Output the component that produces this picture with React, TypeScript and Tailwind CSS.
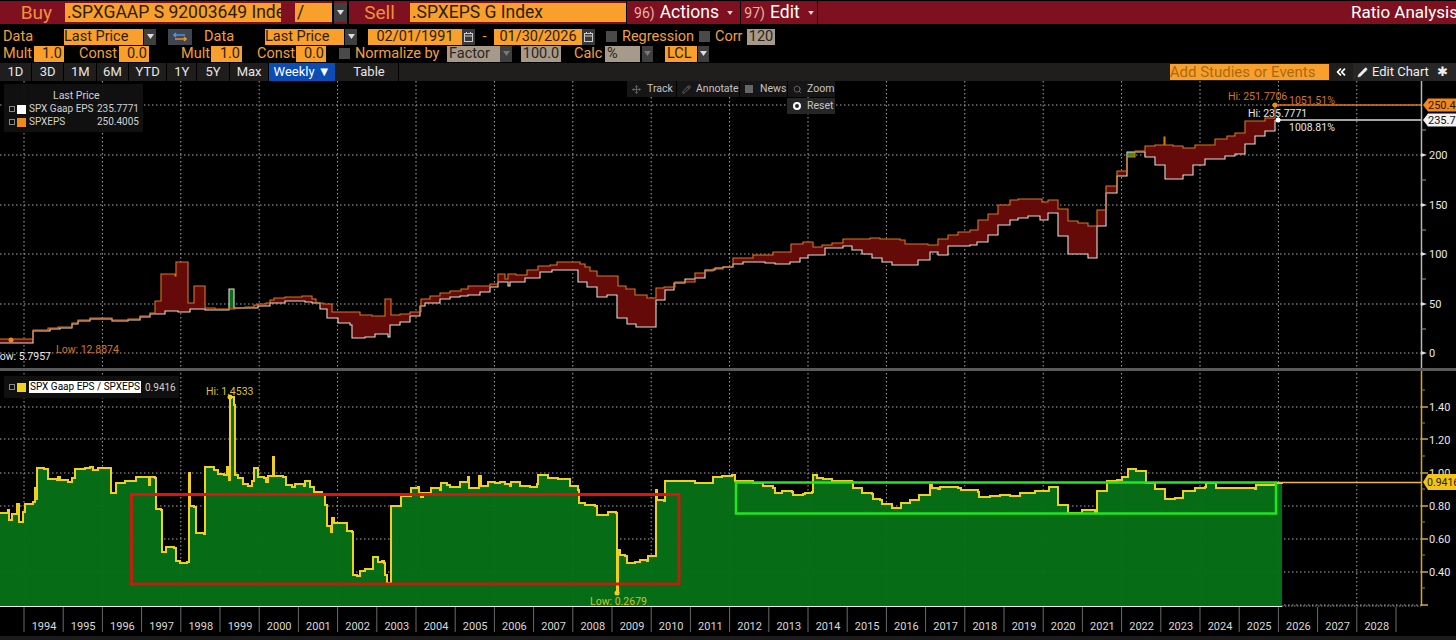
import React from "react";
import { ChevronsLeft, Move, Pencil, Search } from "lucide-react";

type Pt = [number, number];

const orange: Pt[] = [
  [0, 339], [33, 330], [48, 328], [58, 327], [72, 323], [78, 320], [90, 318], [108, 318], [112, 320], [128, 319],
  [140, 316], [150, 313], [155, 301], [161, 274], [175, 276], [176, 262], [188, 303], [194, 286], [205, 308], [215, 309],
  [229, 309], [235, 308], [245, 307], [254, 305], [258, 304], [266, 303], [270, 300], [274, 298], [285, 297], [302, 296],
  [312, 299], [316, 303], [323, 304], [332, 312], [345, 312], [360, 315], [372, 316], [385, 299], [391, 315], [400, 314],
  [410, 312], [421, 299], [430, 296], [440, 293], [450, 291], [461, 289], [468, 286], [490, 284], [498, 274], [505, 279],
  [508, 274], [516, 275], [527, 270], [538, 266], [550, 265], [557, 262], [575, 262], [580, 264], [585, 267], [590, 271],
  [597, 276], [617, 276], [618, 286], [626, 289], [635, 295], [647, 298], [656, 288], [664, 287], [675, 282], [695, 273],
  [705, 271], [713, 269], [723, 267], [733, 258], [753, 255], [773, 252], [791, 244], [803, 242], [812, 242], [813, 247],
  [822, 245], [832, 243], [843, 239], [870, 238], [880, 239], [900, 240], [905, 244], [928, 245], [938, 239], [948, 235],
  [958, 232], [970, 230], [978, 220], [988, 214], [998, 205], [1010, 200], [1018, 199], [1028, 199], [1042, 202], [1048, 200],
  [1058, 209], [1068, 221], [1078, 223], [1088, 226], [1097, 210], [1106, 186], [1117, 171], [1127, 157], [1135, 151], [1145, 146],
  [1155, 145], [1164, 137], [1165, 145], [1173, 146], [1183, 148], [1195, 145], [1215, 139], [1227, 136], [1235, 133], [1245, 121],
  [1265, 118], [1275, 105],
];

const white: Pt[] = [
  [0, 343], [33, 331], [50, 329], [60, 328], [72, 324], [78, 321], [90, 319], [108, 319], [112, 321], [128, 320],
  [140, 317], [150, 314], [165, 311], [178, 312], [188, 312], [190, 309], [205, 310], [229, 310], [229, 289], [234, 308],
  [258, 306], [270, 303], [285, 301], [305, 302], [312, 303], [320, 309], [327, 318], [338, 323], [350, 325], [352, 338],
  [365, 337], [375, 334], [388, 337], [390, 325], [400, 322], [410, 316], [420, 306], [425, 303], [440, 299], [450, 297],
  [460, 296], [468, 295], [480, 292], [490, 287], [498, 282], [508, 286], [510, 282], [525, 278], [537, 278], [540, 272],
  [552, 270], [568, 270], [578, 282], [587, 287], [597, 297], [607, 295], [617, 318], [627, 324], [636, 327], [656, 300],
  [665, 290], [674, 283], [685, 279], [695, 278], [705, 270], [715, 268], [723, 267], [733, 264], [743, 262], [753, 262],
  [765, 263], [775, 264], [790, 262], [800, 258], [808, 255], [825, 248], [843, 246], [852, 250], [862, 254], [872, 258],
  [882, 262], [892, 265], [918, 260], [930, 252], [938, 255], [948, 246], [970, 245], [977, 242], [988, 235], [998, 225],
  [1010, 220], [1018, 218], [1028, 216], [1040, 220], [1048, 213], [1058, 236], [1068, 254], [1088, 258], [1097, 226], [1106, 193],
  [1117, 176], [1127, 152], [1135, 152], [1145, 157], [1155, 165], [1165, 179], [1183, 175], [1193, 165], [1205, 159], [1225, 156],
  [1235, 154], [1245, 144], [1255, 136], [1265, 131], [1275, 120],
];

const ratio: Pt[] = [
  [0, 513], [8, 510], [9, 520], [12, 514], [17, 504], [19, 522], [23, 512], [25, 504], [33, 502], [35, 488],
  [37, 500], [37, 468], [44, 469], [48, 479], [57, 480], [58, 477], [60, 480], [68, 482], [72, 478], [75, 469],
  [85, 468], [90, 467], [93, 470], [98, 468], [110, 468], [111, 493], [116, 483], [125, 481], [136, 477], [148, 477],
  [149, 485], [150, 477], [155, 478], [156, 509], [161, 510], [162, 552], [165, 552], [166, 547], [174, 548], [176, 561],
  [180, 563], [187, 562], [189, 473], [190, 506], [194, 507], [196, 533], [204, 534], [205, 467], [214, 470], [218, 474],
  [224, 475], [227, 467], [229, 480], [230, 397], [233, 397], [234, 405], [235, 475], [238, 478], [243, 484], [248, 486],
  [252, 481], [254, 468], [258, 477], [264, 478], [266, 482], [268, 476], [273, 457], [274, 476], [283, 477], [286, 485],
  [292, 487], [295, 484], [304, 486], [305, 481], [310, 487], [314, 492], [322, 495], [325, 505], [327, 526], [331, 532],
  [332, 518], [334, 523], [345, 523], [347, 531], [352, 532], [353, 575], [357, 576], [360, 571], [365, 569], [373, 557],
  [378, 562], [382, 561], [384, 563], [385, 575], [387, 583], [389, 584], [391, 506], [401, 496], [411, 488], [418, 487],
  [419, 493], [421, 497], [423, 493], [430, 494], [431, 488], [440, 490], [441, 483], [447, 485], [450, 487], [459, 487],
  [460, 482], [468, 477], [469, 488], [478, 488], [479, 476], [481, 486], [488, 482], [495, 483], [500, 482], [505, 484],
  [510, 486], [511, 482], [517, 482], [520, 486], [530, 487], [537, 484], [538, 475], [548, 478], [558, 479], [567, 479],
  [570, 486], [578, 490], [579, 503], [585, 505], [595, 506], [597, 515], [607, 515], [608, 512], [616, 513], [617, 593],
  [618, 550], [620, 555], [625, 556], [627, 563], [635, 562], [640, 560], [647, 561], [648, 556], [655, 556], [656, 490],
  [657, 500], [664, 501], [665, 481], [685, 481], [695, 483], [712, 483], [713, 477], [722, 476], [732, 475], [735, 481],
  [753, 483], [763, 486], [773, 488], [775, 493], [782, 491], [792, 492], [793, 495], [803, 494], [805, 493], [812, 492],
  [813, 475], [817, 478], [823, 479], [832, 481], [852, 482], [853, 488], [861, 488], [862, 493], [872, 494], [873, 499],
  [880, 500], [882, 504], [891, 504], [892, 508], [899, 508], [901, 503], [908, 503], [910, 500], [918, 500], [919, 495],
  [929, 495], [930, 485], [932, 488], [938, 489], [940, 487], [958, 488], [961, 490], [970, 490], [978, 492], [979, 497],
  [990, 496], [1000, 495], [1010, 496], [1020, 493], [1035, 491], [1049, 487], [1058, 505], [1068, 513], [1078, 513], [1082, 510],
  [1095, 512], [1097, 491], [1107, 481], [1117, 480], [1122, 477], [1128, 469], [1136, 471], [1146, 483], [1155, 489], [1165, 499],
  [1175, 498], [1183, 491], [1195, 488], [1205, 487], [1206, 483], [1215, 483], [1216, 488], [1235, 488], [1255, 489], [1256, 485],
  [1275, 483], [1282, 482],
];

// stepped path: run along, then jump to the new value
const stepPath = (pts: Pt[]) =>
  pts.reduce((d, [x, y], i) => (i === 0 ? `M${x} ${y}` : `${d}H${x}V${y}`), "");

const betweenPath = () => {
  const top = stepPath(orange);
  const back = [...white].reverse();
  const bottom = back.reduce((d, [x, y]) => `${d}V${y}H${x}`, `L${back[0][0]} ${back[0][1]}`);
  return `${top}${bottom}Z`;
};

const gridXs = Array.from({ length: 18 }, (_, i) => 24 + i * 78.4);
const years = Array.from({ length: 35 }, (_, i) => 1994 + i);

const Caret = ({ dim = false, className = "w-[12px]" }: { dim?: boolean; className?: string }) => (
  <div className={`${className} h-[16px] bg-[#3f3f3f] flex items-center justify-center`}>
    <svg width="7" height="5" viewBox="0 0 7 5">
      <path d="M0 0H7L3.5 5Z" fill={dim ? "#777" : "#ddd"} />
    </svg>
  </div>
);

const Calendar = () => (
  <div className="w-[13px] h-[16px] bg-[#3a3a3a] flex items-center justify-center">
    <svg width="9" height="10" viewBox="0 0 9 10" fill="none" stroke="#ccc" strokeWidth="1">
      <rect x="0.5" y="1.5" width="8" height="8" />
      <path d="M0.5 4H8.5M2.5 0V2M6.5 0V2" />
    </svg>
  </div>
);

const Check = ({ className = "" }: { className?: string }) => (
  <div className={`w-[11px] h-[11px] bg-[#4a4a4a] ${className}`} />
);

const OrangeBox = ({ className = "", children }: { className?: string; children: React.ReactNode }) => (
  <div className={`h-[16px] pt-[2px] bg-[#f9a02c] text-[#2f1c00] flex items-center leading-none ${className}`}>{children}</div>
);

const TanBox = ({ className = "", children }: { className?: string; children: React.ReactNode }) => (
  <div className={`h-[16px] pt-[2px] bg-[#a79a88] text-[#2a2620] flex items-center leading-none ${className}`}>{children}</div>
);

const Label = ({ className = "", children }: { className?: string; children: React.ReactNode }) => (
  <span className={`pt-[2px] text-[#f2a038] leading-none ${className}`}>{children}</span>
);

const Tab = ({ w, children }: { w: string; children: React.ReactNode }) => (
  <div className={`${w} h-full flex items-center justify-center text-[#e6e6e6] border-r border-black`}>{children}</div>
);

const Flag = ({ y, fill, color, text }: { y: number; fill: string; color: string; text: string }) => (
  <g>
    <path d={`M1423 ${y}L1428 ${y - 6.5}H1456V${y + 6.5}H1428Z`} fill={fill} />
    <text x="1428" y={y + 4} fontSize="11" fill={color}>{text}</text>
  </g>
);

const Charts = () => (
  <svg width="1456" height="559" viewBox="0 81 1456 559" className="block">
    {/* grid lines */}
    <g stroke="#a8a8a8" strokeWidth="1" strokeDasharray="1.5 2.5">
      {gridXs.map((x) => (
        <line key={x} x1={x} x2={x} y1="81" y2="606" />
      ))}
      {[105, 155, 205, 254, 304, 353, 407, 439, 473, 506, 539, 572, 605].map((y) => (
        <line key={y} x1="0" x2="1421" y1={y} y2={y} />
      ))}
    </g>

    {/* top panel */}
    <path d={betweenPath()} fill="#640a08" />
    <rect x="229" y="289" width="5" height="19" fill="#0a6b18" />
    <rect x="1128" y="152" width="7" height="5" fill="#3f8a18" />
    <path d={stepPath(white)} fill="none" stroke="#e2dcd8" strokeWidth="1.1" />
    <path d={stepPath(orange)} fill="none" stroke="#d9761c" strokeWidth="1.1" />
    <line x1="1275" x2="1421" y1="105" y2="105" stroke="#e07a14" strokeWidth="1.5" />
    <line x1="1277" x2="1421" y1="120" y2="120" stroke="#dddddd" strokeWidth="1.5" />
    <circle cx="1275" cy="105" r="2.5" fill="#f08a14" />
    <circle cx="1278" cy="120" r="2.5" fill="#ffffff" />
    <circle cx="11" cy="340" r="2.5" fill="#f08a14" />

    <g fill="#d9761c" fontSize="10.5">
      <text x="1228" y="100">Hi: 251.7706</text>
      <text x="1289" y="104">1051.51%</text>
      <text x="56" y="353">Low: 12.8874</text>
    </g>
    <g fill="#e8e8e8" fontSize="10.5">
      <text x="1248" y="117">Hi: 235.7771</text>
      <text x="1289" y="131">1008.81%</text>
      <text x="-6" y="360">Low: 5.7957</text>
    </g>

    {/* top axis */}
    <line x1="1421.5" x2="1421.5" y1="81" y2="368" stroke="#b5b5b5" strokeWidth="1.5" />
    {[155, 205, 254, 304, 353].map((y) => (
      <path key={y} d={`M1421 ${y - 2}L1427 ${y}L1421 ${y + 2}Z`} fill="#ddd" />
    ))}
    {[180, 230, 279, 329, 130].map((y) => (
      <line key={y} x1="1421" x2="1426" y1={y} y2={y} stroke="#999" />
    ))}
    <g fill="#e8e8e8" fontSize="11">
      <text x="1429" y="159">200</text>
      <text x="1429" y="209">150</text>
      <text x="1429" y="258">100</text>
      <text x="1429" y="308">50</text>
      <text x="1429" y="357">0</text>
    </g>
    <Flag y={105} fill="#f08a1c" color="#2a1600" text="250.40" />
    <Flag y={120} fill="#f2f2f2" color="#111" text="235.77" />

    {/* panel divider */}
    <rect x="0" y="368" width="1456" height="3" fill="#5a5a5a" />

    {/* bottom panel */}
    <path d={`${stepPath(ratio)}V606H0Z`} fill="#067016" fillOpacity="0.96" />
    <path d={stepPath(ratio)} fill="none" stroke="#efd01e" strokeWidth="2" />
    <line x1="1277" x2="1421" y1="482.5" y2="482.5" stroke="#f0b83a" strokeWidth="1.5" />
    <circle cx="230" cy="397" r="2.5" fill="#f2d21e" />
    <circle cx="617" cy="593" r="2.5" fill="#f2d21e" />
    <text x="206" y="395" fontSize="10.5" fill="#d8c23a">Hi: 1.4533</text>
    <text x="590" y="605" fontSize="10.5" fill="#c8c42a">Low: 0.2679</text>

    {/* annotation boxes */}
    <path d="M131.5 584V494.5H679V584Z" fill="none" stroke="#b8220f" strokeWidth="3" />
    <line x1="130" x2="680" y1="494.5" y2="494.5" stroke="#ea0f0f" strokeWidth="2.5" />
    <rect x="736" y="482.5" width="540" height="31" fill="none" stroke="#22e622" strokeWidth="2.5" />

    {/* bottom axis */}
    <line x1="1421.5" x2="1421.5" y1="371" y2="606" stroke="#d4a92a" strokeWidth="1.5" />
    {[407, 439, 473, 506, 539, 572, 605].map((y) => (
      <line key={y} x1="1421" x2="1428" y1={y} y2={y} stroke="#d4a92a" strokeWidth="1.5" />
    ))}
    {[390, 423, 456, 489, 522, 555, 588].map((y) => (
      <line key={y} x1="1421" x2="1425" y1={y} y2={y} stroke="#a8861f" />
    ))}
    <g fill="#e8e8e8" fontSize="11">
      <text x="1429" y="411">1.40</text>
      <text x="1429" y="444">1.20</text>
      <text x="1429" y="477">1.00</text>
      <text x="1429" y="510">0.80</text>
      <text x="1429" y="543">0.60</text>
      <text x="1429" y="576">0.40</text>
    </g>
    <path d="M1423 482L1428 474H1456V490H1428Z" fill="#f2c418" />
    <text x="1427" y="486" fontSize="10.5" fill="#2a2000">0.9416</text>

    {/* time axis */}
    <line x1="0" x2="1282" y1="606.5" y2="606.5" stroke="#ededed" strokeWidth="1" />
    <line x1="1282" x2="1421" y1="606" y2="606" stroke="#999" strokeDasharray="1.5 1.5" />
    {years.map((yr, i) => (
      <g key={yr}>
        <line x1={24 + i * 39.2} x2={24 + i * 39.2} y1="607" y2="632" stroke="#6a6a6a" />
        <text x={44 + i * 39.2} y="630" fontSize="11" textAnchor="middle" fill="#d8d8d8">{yr}</text>
      </g>
    ))}
    <line x1="1396" x2="1396" y1="607" y2="632" stroke="#6a6a6a" />
    <rect x="0" y="636" width="1456" height="4" fill="#1c1c1c" />
  </svg>
);

export default function App() {
  return (
    <div className="w-[1456px] h-[640px] bg-black overflow-hidden flex flex-col font-['Roboto',sans-serif]">
      {/* security header */}
      <div className="h-[23px] mt-px flex items-stretch text-[17.5px] leading-none bg-[#7f1020]">
        <div className="w-[65px] flex items-center justify-end pr-[13px] text-[19px] text-[#f0913a]">Buy</div>
        <div className="w-[216px] bg-[#f9a02c] text-[#2f1c00] my-[2px] pl-[2px] flex items-center overflow-hidden whitespace-nowrap">
          .SPXGAAP S 92003649 Index
        </div>
        <div className="w-[14px]" />
        <div className="w-[37px] bg-[#f9a02c] text-[#2f1c00] my-[2px] pl-[2px] flex items-center">/</div>
        <div className="w-[2px] bg-black" />
        <div className="w-[13px] bg-[#3f3f3f] my-[2px] flex items-center justify-center">
          <svg width="7" height="5" viewBox="0 0 7 5"><path d="M0 0H7L3.5 5Z" fill="#ddd" /></svg>
        </div>
        <div className="w-[2px] bg-black" />
        <div className="w-[61px] flex items-center justify-center text-[19px] text-[#f0913a]">Sell</div>
        <div className="w-[216px] bg-[#f9a02c] text-[#2f1c00] my-[2px] pl-[2px] flex items-center whitespace-nowrap">
          .SPXEPS G Index
        </div>
        <div className="w-[114px] border-l border-black flex items-center justify-center gap-[5px] text-white">
          <span className="text-[#e6b0a8] text-[14px]">96)</span>
          <span>Actions</span>
          <svg width="6" height="4" viewBox="0 0 7 5" className="ml-[3px]"><path d="M0 0H7L3.5 5Z" fill="#ddd" /></svg>
        </div>
        <div className="w-[78px] border-x border-black flex items-center justify-center gap-[5px] text-white">
          <span className="text-[#e6b0a8] text-[14px]">97)</span>
          <span>Edit</span>
          <svg width="6" height="4" viewBox="0 0 7 5" className="ml-[3px]"><path d="M0 0H7L3.5 5Z" fill="#ddd" /></svg>
        </div>
        <div className="flex-1 flex items-center pl-[533px] text-white text-[17px] whitespace-nowrap overflow-hidden">Ratio Analysis</div>
      </div>

      {/* data row */}
      <div className="h-[17px] mt-[4px] flex items-center text-[14.5px] whitespace-nowrap">
        <Label className="w-[64px] pl-[3px]">Data</Label>
        <OrangeBox className="w-[79px]">Last Price</OrangeBox>
        <Caret className="w-[12px] ml-px" />
        <div className="w-[24px] h-[16px] ml-[12px] bg-[#3f4650] flex items-center justify-center">
          <svg width="14" height="10" viewBox="0 0 14 10" fill="none" strokeWidth="1.6">
            <path d="M1 3H12M3 1L1 3L3 5" stroke="#3d9be0" />
            <path d="M13 7H2M11 5L13 7L11 9" stroke="#ef8a26" />
          </svg>
        </div>
        <Label className="w-[61px] ml-[12px]">Data</Label>
        <OrangeBox className="w-[79px]">Last Price</OrangeBox>
        <Caret className="w-[12px] ml-px" />
        <OrangeBox className="w-[94px] ml-[11px] justify-center">02/01/1991</OrangeBox>
        <Calendar />
        <Label className="w-[19px] text-center">-</Label>
        <OrangeBox className="w-[88px] justify-center">01/30/2026</OrangeBox>
        <Calendar />
        <Check className="ml-[11px]" />
        <Label className="ml-[5px] w-[72px]">Regression</Label>
        <Check className="ml-[5px]" />
        <Label className="ml-[5px] w-[28px]">Corr</Label>
        <TanBox className="w-[28px] ml-[4px] justify-center">120</TanBox>
      </div>

      {/* mult row */}
      <div className="h-[17px] flex items-center text-[14.5px] whitespace-nowrap">
        <Label className="w-[34px] pl-[3px]">Mult</Label>
        <OrangeBox className="w-[30px] justify-end pr-[2px]">1.0</OrangeBox>
        <Label className="w-[40px] ml-[15px]">Const</Label>
        <OrangeBox className="w-[30px] justify-end pr-[2px]">0.0</OrangeBox>
        <Label className="w-[30px] ml-[32px]">Mult</Label>
        <OrangeBox className="w-[31px] justify-end pr-[2px]">1.0</OrangeBox>
        <Label className="w-[39px] ml-[15px]">Const</Label>
        <OrangeBox className="w-[30px] justify-end pr-[2px]">0.0</OrangeBox>
        <Check className="ml-[13px]" />
        <Label className="w-[87px] ml-[5px]">Normalize by</Label>
        <TanBox className="w-[53px] ml-[5px] pl-[2px]">Factor</TanBox>
        <Caret dim className="w-[12px]" />
        <TanBox className="w-[40px] ml-[9px] justify-center">100.0</TanBox>
        <Label className="w-[27px] ml-[13px]">Calc</Label>
        <TanBox className="w-[35px] ml-[4px] pl-[2px]">%</TanBox>
        <Caret dim className="w-[11px] ml-[2px]" />
        <OrangeBox className="w-[32px] ml-[12px] pl-[2px]">LCL</OrangeBox>
        <Caret className="w-[11px] ml-px" />
      </div>

      {/* range tabs */}
      <div className="h-[18px] mt-px bg-[#1f1e1c] flex items-center text-[13px] whitespace-nowrap">
        <Tab w="w-[32px]">1D</Tab>
        <Tab w="w-[33px]">3D</Tab>
        <Tab w="w-[33px]">1M</Tab>
        <Tab w="w-[32px]">6M</Tab>
        <Tab w="w-[39px]">YTD</Tab>
        <Tab w="w-[30px]">1Y</Tab>
        <Tab w="w-[33px]">5Y</Tab>
        <Tab w="w-[40px]">Max</Tab>
        <div className="w-[66px] h-full bg-[#0b4db5] text-white flex items-center justify-center">Weekly ▼</div>
        <div className="w-[5px]" />
        <Tab w="w-[60px]">Table</Tab>
        <div className="w-[778px]" />
        <div className="w-[161px] h-[16px] bg-[#f9a02c] text-[#a96a14] text-[15px] flex items-center">Add Studies or Events</div>
        <div className="w-[20px] h-full ml-[2px] text-white flex items-center justify-center">
          <ChevronsLeft size={14} strokeWidth={3} />
        </div>
        <div className="h-full w-[104px] ml-[2px] flex items-center gap-[4px] pl-[4px] bg-[#262626] text-[#eee]">
          <Pencil size={11} fill="#eee" strokeWidth={1} />
          Edit Chart
          <span className="ml-[4px]">✱</span>
        </div>
      </div>

      {/* chart area */}
      <div className="relative flex-1">
        <Charts />

        {/* legend, top panel */}
        <div className="absolute left-[4px] top-[3px] w-[139px] h-[48px] bg-[#111111]/95 text-[10px] leading-[12px] text-[#d0d0d0] whitespace-nowrap">
          <div className="pl-[49px] pt-[6px] text-[10.5px]">Last Price</div>
          <div className="flex items-center mt-[1px]">
            <div className="w-[6px] h-[6px] ml-[5px] border border-[#888]" />
            <div className="w-[9px] h-[9px] ml-[2px] bg-white" />
            <div className="w-[68px] ml-[3px]">SPX Gaap EPS</div>
            <div>235.7771</div>
          </div>
          <div className="flex items-center mt-[1px]">
            <div className="w-[6px] h-[6px] ml-[5px] border border-[#888]" />
            <div className="w-[9px] h-[9px] ml-[2px] bg-[#f08a1c]" />
            <div className="w-[68px] ml-[3px]">SPXEPS</div>
            <div>250.4005</div>
          </div>
        </div>

        {/* legend, bottom panel */}
        <div className="absolute left-[4px] top-[295px] w-[175px] h-[22px] bg-[#111111]/95 flex items-center text-[10px] whitespace-nowrap">
          <div className="w-[6px] h-[6px] ml-[5px] border border-[#888]" />
          <div className="w-[9px] h-[9px] ml-[2px] bg-[#f2d21e]" />
          <div className="ml-[3px] w-[112px] px-px bg-white text-black leading-[12px]">SPX Gaap EPS / SPXEPS</div>
          <div className="ml-[4px] text-[#d0d0d0]">0.9416</div>
        </div>

        {/* chart tools */}
        <div className="absolute left-[627px] top-0 flex gap-px text-[10.5px] text-[#c4c4c4] whitespace-nowrap">
          <div className="h-[16px] w-[49px] bg-[#161616] flex items-center gap-[6px] pl-[5px]">
            <Move size={9} color="#777" />
            Track
          </div>
          <div className="h-[16px] w-[62px] bg-[#161616] flex items-center gap-[5px] pl-[5px]">
            <Pencil size={9} color="#777" />
            Annotate
          </div>
          <div className="h-[16px] w-[47px] bg-[#161616] flex items-center gap-[7px] pl-[5px]">
            <div className="w-[8px] h-[8px] bg-[#666]" />
            News
          </div>
          <div className="h-[16px] w-[47px] bg-[#161616] flex items-center gap-[5px] pl-[5px]">
            <Search size={9} color="#777" />
            Zoom
          </div>
        </div>
        <div className="absolute left-[787px] top-[17px] h-[16px] w-[48px] bg-[#262626] flex items-center gap-[6px] pl-[6px] text-[10.5px] text-[#c4c4c4]">
          <div className="w-[8px] h-[8px] rounded-full border-[2.5px] border-white" />
          Reset
        </div>
      </div>
    </div>
  );
}
